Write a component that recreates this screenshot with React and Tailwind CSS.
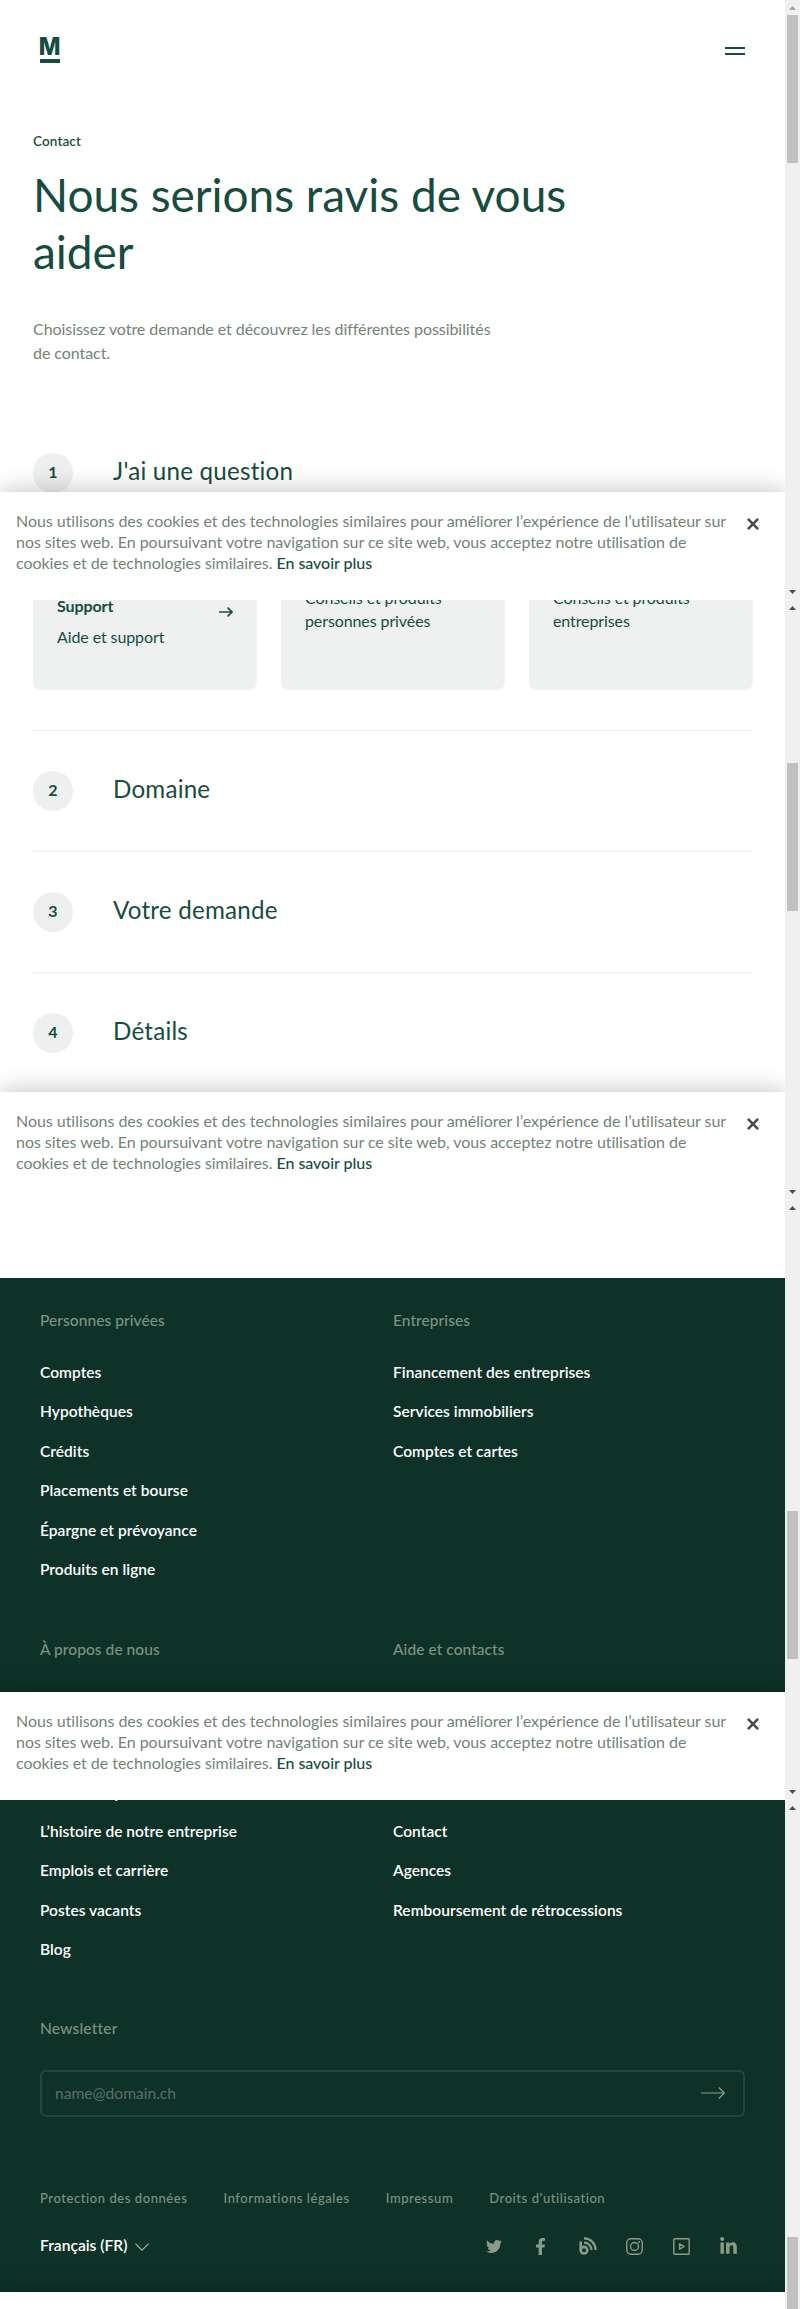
import React from 'react';
import { FaTwitter, FaFacebookF, FaLinkedinIn } from 'react-icons/fa';

function Scrollbar({ children, muted = false }) {
  return (
    <div className="flex w-[15px] shrink-0 flex-col items-center justify-between bg-[#f0f0f0] pt-[6px] pb-[6px]">
      <svg width="7" height="4" viewBox="0 0 7 4" className={muted ? 'text-[#a3a3a3]' : 'text-[#4d4d4d]'}>
        <path d="M0 4L3.5 0L7 4Z" fill="currentColor" />
      </svg>
      <div className="flex w-full flex-1 justify-center">{children}</div>
      <svg width="7" height="4" viewBox="0 0 7 4" className="text-[#4d4d4d]">
        <path d="M0 0L3.5 4L7 0Z" fill="currentColor" />
      </svg>
    </div>
  );
}

function CookieBanner() {
  return (
    <div className="relative z-10 flex h-[108px] shrink-0 items-start bg-white pt-[18px] pl-4 shadow-[0_0_24px_rgba(0,0,0,0.26)]">
      <p className="w-[720px] text-[16px] leading-[21px] tracking-[-0.04px] text-[#748377]">
        Nous utilisons des cookies et des technologies similaires pour améliorer l’expérience de l’utilisateur sur
        <br />
        nos sites web. En poursuivant votre navigation sur ce site web, vous acceptez notre utilisation de
        <br />
        cookies et de technologies similaires. <a className="font-medium tracking-[-0.04px] text-[#164d3e]">En savoir plus</a>
      </p>
      <svg width="12" height="12" viewBox="0 0 12 12" className="mt-[8px] ml-[11px]" fill="none" stroke="#4b4b4b" strokeWidth="2.6">
        <path d="M0.9 0.9L11.1 11.1M11.1 0.9L0.9 11.1" />
      </svg>
    </div>
  );
}

function Frame({ children, bar, short = false }) {
  return (
    <section className={short ? 'flex h-[509px] overflow-hidden' : 'flex h-[600px] overflow-hidden'}>
      <div className="flex w-[785px] flex-col overflow-hidden">
        <div className="h-[492px] shrink-0 overflow-hidden">{children}</div>
        <CookieBanner />
      </div>
      {bar}
    </section>
  );
}

function Step({ n, title }) {
  return (
    <div className="flex h-10 gap-10">
      <div className="flex size-10 items-center justify-center rounded-full bg-[#eef0ef] pb-[2px] text-[16px] font-bold text-[#164d3e]">{n}</div>
      <h2 className="text-[24.2px] leading-[36px] tracking-[0.2px] text-[#164d3e]">{title}</h2>
    </div>
  );
}

function LinkColumn({ title, links }) {
  return (
    <div className="text-[15.5px] leading-6">
      {title && <h3 className="mb-7 font-medium tracking-[0.06px] text-[#7d9382]">{title}</h3>}
      <ul className="font-semibold tracking-[0.04px] text-white">
        {links.map((l) => (
          <li key={l} className="h-[39.4px]">{l}</li>
        ))}
      </ul>
    </div>
  );
}

export default function App() {
  return (
    <main className="w-[800px] bg-white font-[Lato,sans-serif]">
      <Frame
        bar={
          <Scrollbar muted>
            <div className="mt-[5px] h-[148px] w-[11px] bg-[#c1c1c1]" />
          </Scrollbar>
        }
      >
        <header className="flex h-[131px] items-start justify-between px-10 pt-[38px]">
          <div className="flex w-5 flex-col items-center">
            <span className="flex h-[17px] origin-center scale-x-[0.94] items-center justify-center font-[Inter,sans-serif] text-[24.5px] leading-[17px] font-extrabold text-[#164d3e]">M</span>
            <span className="mt-[3.5px] h-[4.5px] w-5 bg-[#164d3e]" />
          </div>
          <div className="mt-[9px] flex w-5 flex-col gap-1">
            <span className="h-[2px] bg-[#164d3e]" />
            <span className="h-[2px] bg-[#164d3e]" />
          </div>
        </header>
        <div className="px-[33px]">
          <p className="text-[13.5px] leading-5 font-semibold tracking-[0.12px] text-[#164d3e]">Contact</p>
          <h1 className="mt-[15px] text-[46px] leading-[57px] tracking-[-0.03px] text-[#164d3e]">
            Nous serions ravis de vous
            <br />
            aider
          </h1>
          <p className="mt-[37px] text-[16px] leading-[23.5px] tracking-[-0.06px] text-[#748377]">
            Choisissez votre demande et découvrez les différentes possibilités
            <br />
            de contact.
          </p>
          <div className="mt-[89px]">
            <Step n="1" title="J'ai une question" />
          </div>
        </div>
      </Frame>

      <Frame
        bar={
          <Scrollbar>
            <div className="mt-[153px] h-[148px] w-[11px] bg-[#c1c1c1]" />
          </Scrollbar>
        }
      >
        <div className="px-[33px]">
          <div className="-mt-[30px] grid w-[720px] grid-cols-3 gap-6 text-[16px] leading-[23px] tracking-[-0.1px] text-[#164d3e]">
            <div className="flex h-[120px] justify-between rounded-lg bg-[#eff1f0] px-6 pt-6">
              <div>
                <p className="leading-6 font-bold">Support</p>
                <p className="mt-[7px]">Aide et support</p>
              </div>
              <svg width="14" height="10" viewBox="0 0 14 10" className="mt-[13px]" fill="none" stroke="currentColor" strokeWidth="1.6">
                <path d="M0 5H13M8.6 0.6L13 5L8.6 9.4" />
              </svg>
            </div>
            <p className="h-[120px] rounded-lg bg-[#eff1f0] px-6 pt-4">
              Conseils et produits
              <br />
              personnes privées
            </p>
            <p className="h-[120px] rounded-lg bg-[#eff1f0] px-6 pt-4">
              Conseils et produits
              <br />
              entreprises
            </p>
          </div>
          <div className="mt-10 w-[720px] divide-y divide-[#ececec] border-t border-[#ececec]">
            <div className="py-10"><Step n="2" title="Domaine" /></div>
            <div className="py-10"><Step n="3" title="Votre demande" /></div>
            <div className="pt-10"><Step n="4" title="Détails" /></div>
          </div>
        </div>
      </Frame>

      <Frame
        bar={
          <Scrollbar>
            <div className="mt-[301px] h-[148px] w-[11px] bg-[#c1c1c1]" />
          </Scrollbar>
        }
      >
        <div className="mt-[78px] h-[414px] bg-[#0e3228] pt-[30px] pr-[39px] pl-10">
          <div className="grid grid-cols-2">
            <LinkColumn
              title="Personnes privées"
              links={['Comptes', 'Hypothèques', 'Crédits', 'Placements et bourse', 'Épargne et prévoyance', 'Produits en ligne']}
            />
            <LinkColumn title="Entreprises" links={['Financement des entreprises', 'Services immobiliers', 'Comptes et cartes']} />
          </div>
          <div className="mt-[41px] grid grid-cols-2">
            <LinkColumn title="À propos de nous" links={[]} />
            <LinkColumn title="Aide et contacts" links={[]} />
          </div>
        </div>
      </Frame>

      <Frame
        short
        bar={
          <div className="flex w-[15px] shrink-0 flex-col items-center bg-[#f0f0f0] pt-[6px]">
            <svg width="7" height="4" viewBox="0 0 7 4">
              <path d="M0 4L3.5 0L7 4Z" fill="#4d4d4d" />
            </svg>
            <div className="mt-[427px] w-[11px] flex-1 bg-[#c1c1c1]" />
          </div>
        }
      >
        <footer className="flex h-[492px] flex-col bg-[#0e3228] px-10">
          <div className="-mt-[20.4px] -mr-px grid grid-cols-2">
            <LinkColumn links={['Notre banque', 'L’histoire de notre entreprise', 'Emplois et carrière', 'Postes vacants', 'Blog']} />
            <LinkColumn links={['Adresses', 'Contact', 'Agences', 'Remboursement de rétrocessions']} />
          </div>
          <h3 className="mt-[39.4px] text-[15.5px] leading-6 font-medium tracking-[0.2px] text-[#7d9382]">Newsletter</h3>
          <div className="mt-[30px] flex h-[47px] items-center justify-between rounded-[6px] border-2 border-[#26463c] pr-[18px] pl-[13px]">
            <span className="text-[15.6px] leading-6 text-[#5c6f6b]">name@domain.ch</span>
            <svg width="24" height="12" viewBox="0 0 24 12" fill="none" stroke="#8ca092" strokeWidth="1.2">
              <path d="M0 6H23.4M17.8 0.5L23.4 6L17.8 11.5" />
            </svg>
          </div>
          <div className="mt-[71px] flex gap-9 text-[13px] leading-5 font-medium tracking-[0.57px] text-[#7d9382]">
            <span>Protection des données</span>
            <span>Informations légales</span>
            <span>Impressum</span>
            <span>Droits d’utilisation</span>
          </div>
          <div className="mt-[25px] flex h-6 items-center justify-between">
            <div className="flex items-center gap-2 text-[15.6px] leading-6 font-semibold text-white">
              Français (FR)
              <svg width="14" height="8" viewBox="0 0 14 8" className="mt-[5px]" fill="none" stroke="#a9b9ae" strokeWidth="1.1">
                <path d="M0.4 0.6L7 7.2L13.6 0.6" />
              </svg>
            </div>
            <div className="mt-[3px] mr-2 flex items-center text-[#8a9c88]">
              <FaTwitter className="h-[17px] w-4" />
              <FaFacebookF className="ml-[33px] h-[17px] w-[11px]" />
              <svg width="18" height="18" viewBox="0 0 18 18" className="ml-[33px]" fill="none" stroke="currentColor">
                <path d="M1.7 4.4V13.2" strokeWidth="2.6" />
                <circle cx="5" cy="13.2" r="3.3" strokeWidth="2.6" />
                <path d="M5 1.4C11.6 1.4 16.6 6.4 16.6 13M5 5.6C9.2 5.6 12.4 8.8 12.4 13" strokeWidth="2.3" />
              </svg>
              <svg width="17" height="17" viewBox="0 0 17 17" className="ml-[29px]" fill="none" stroke="currentColor" strokeWidth="1.4">
                <rect x="0.8" y="0.8" width="15.4" height="15.4" rx="4" />
                <circle cx="8.5" cy="8.5" r="4" />
                <circle cx="13.1" cy="4" r="1" fill="currentColor" stroke="none" />
              </svg>
              <svg width="17" height="17" viewBox="0 0 17 17" className="ml-[30px]" fill="none" stroke="currentColor" strokeWidth="1.4">
                <rect x="0.8" y="0.8" width="15.4" height="15.4" rx="0.8" />
                <path d="M6.6 5.8L11.2 8.5L6.6 11.2Z" strokeLinejoin="round" />
              </svg>
              <FaLinkedinIn className="ml-[30px] h-[19px] w-[17px]" />
            </div>
          </div>
        </footer>
      </Frame>
    </main>
  );
}
